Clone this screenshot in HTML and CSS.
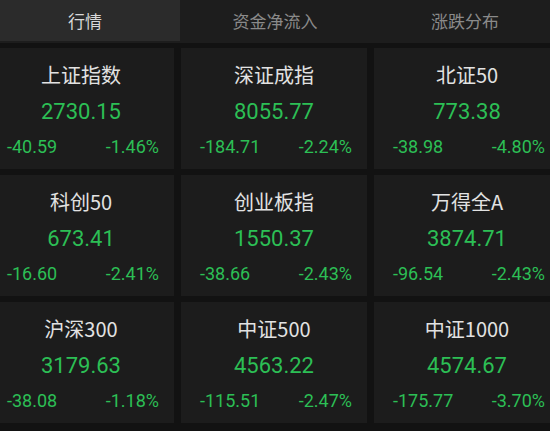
FILE: index.html
```html
<!DOCTYPE html>
<html lang="zh">
<head>
<meta charset="utf-8">
<link rel="stylesheet" href="styles.css">
</head>
<body>
<div class="tabs">
  <div class="tab active">行情</div>
  <div class="tab">资金净流入</div>
  <div class="tab">涨跌分布</div>
</div>
<div class="grid">
  <div class="card"><div class="name">上证指数</div><div class="value">2730.15</div><div class="chg"><span>-40.59</span><span>-1.46%</span></div></div>
  <div class="card"><div class="name">深证成指</div><div class="value">8055.77</div><div class="chg"><span>-184.71</span><span>-2.24%</span></div></div>
  <div class="card"><div class="name">北证50</div><div class="value">773.38</div><div class="chg"><span>-38.98</span><span>-4.80%</span></div></div>
  <div class="card"><div class="name">科创50</div><div class="value">673.41</div><div class="chg"><span>-16.60</span><span>-2.41%</span></div></div>
  <div class="card"><div class="name">创业板指</div><div class="value">1550.37</div><div class="chg"><span>-38.66</span><span>-2.43%</span></div></div>
  <div class="card"><div class="name">万得全A</div><div class="value">3874.71</div><div class="chg"><span>-96.54</span><span>-2.43%</span></div></div>
  <div class="card"><div class="name">沪深300</div><div class="value">3179.63</div><div class="chg"><span>-38.08</span><span>-1.18%</span></div></div>
  <div class="card"><div class="name">中证500</div><div class="value">4563.22</div><div class="chg"><span>-115.51</span><span>-2.47%</span></div></div>
  <div class="card"><div class="name">中证1000</div><div class="value">4574.67</div><div class="chg"><span>-175.77</span><span>-3.70%</span></div></div>
</div>
</body>
</html>
```
FILE: styles.css
```css
html, body {
  margin: 0;
  padding: 0;
  background: #121212;
  width: 550px;
  height: 431px;
  overflow: hidden;
  font-family: Roboto, "Noto Sans CJK SC", sans-serif;
}
.tabs {
  display: grid;
  grid-template-columns: 190px 190px 190px;
  margin-left: -10px;
  height: 43px;
  background: #1d1d1d;
  align-items: start;
}
.tab {
  height: 41px;
  line-height: 41px;
  text-align: center;
  font-size: 17px;
  color: #8a8a8a;
  font-family: "Noto Sans CJK SC", sans-serif;
}
.tab.active {
  background: #2b2b2b;
  color: #d8d8d8;
}
.grid {
  display: grid;
  grid-template-columns: 186px 186px 186px;
  grid-auto-rows: 121px;
  column-gap: 7px;
  row-gap: 6px;
  margin-left: -12px;
  margin-top: 5px;
}
.card {
  background: #1c1c1c;
  padding-top: 14px;
  display: flex;
  flex-direction: column;
  align-items: center;
}
.name {
  font-family: "Noto Sans CJK SC", sans-serif;
  font-size: 20px;
  line-height: 25px;
  color: #e2e2e2;
}
.value {
  margin-top: 12px;
  font-size: 22px;
  line-height: 26px;
  color: #2cbf55;
}
.chg {
  margin-top: 11px;
  align-self: stretch;
  display: flex;
  justify-content: space-between;
  padding: 0 15px 0 19px;
  font-size: 18px;
  line-height: 22px;
  color: #2cbf55;
}
```
